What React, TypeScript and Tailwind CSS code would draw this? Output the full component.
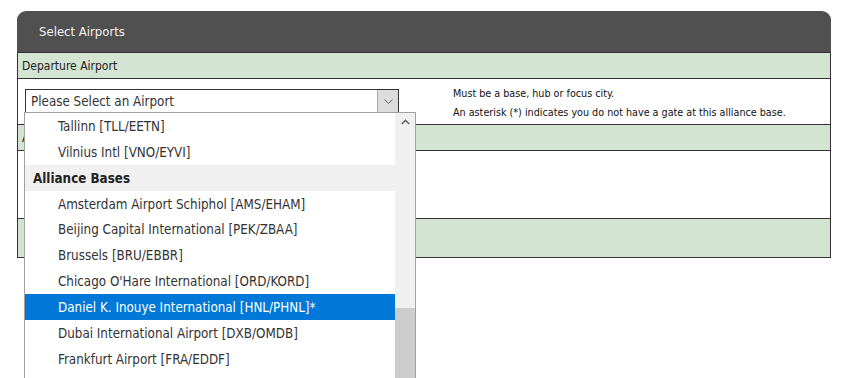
import React from "react";

const items: { label: string; group?: boolean; selected?: boolean }[] = [
  { label: "Tallinn [TLL/EETN]" },
  { label: "Vilnius Intl [VNO/EYVI]" },
  { label: "Alliance Bases", group: true },
  { label: "Amsterdam Airport Schiphol [AMS/EHAM]" },
  { label: "Beijing Capital International [PEK/ZBAA]" },
  { label: "Brussels [BRU/EBBR]" },
  { label: "Chicago O'Hare International [ORD/KORD]" },
  { label: "Daniel K. Inouye International [HNL/PHNL]*", selected: true },
  { label: "Dubai International Airport [DXB/OMDB]" },
  { label: "Frankfurt Airport [FRA/EDDF]" },
];

export default function App() {
  return (
    <div className="relative h-[378px] w-[842px] overflow-hidden bg-white font-['DejaVu_Sans_Condensed','DejaVu_Sans',sans-serif] pl-[17px] pt-[11px]">
      <div className="w-[814px]">
        <div className="flex h-[41px] items-center rounded-t-[9px] bg-[#505050] pl-[22px] pt-[1px] text-[13px] text-[#f2f2f2]">
          Select Airports
        </div>
        <div className="border-x border-b border-[#333333]">
          <div className="flex h-[26px] items-center border-t border-[#333333] bg-[#d3e4d3] pl-[4px] text-[12px] text-[#222222]">
            Departure Airport
          </div>
          <div className="flex h-[46px] items-start border-t border-[#333333] bg-white pl-[7px]">
            <div className="relative mt-[10px] flex h-[24px] w-[374px] items-center border border-[#333333] bg-white pl-[5px] pt-[2px] text-[13.3px] text-[#333333]">
              Please Select an Airport
              <div className="absolute bottom-0 right-0 top-0 flex w-[21px] items-center justify-center border-l border-[#a8a8a8] bg-[#dcdcdc]">
                <svg width="9" height="5" viewBox="0 0 9 5" fill="none">
                  <path d="M0.5 0.5 L4.5 4.5 L8.5 0.5" stroke="#606060" strokeWidth="1" />
                </svg>
              </div>
            </div>
            <div className="ml-[54px] mt-[5px] flex flex-col text-[10.7px] leading-[19px] text-[#111111]">
              <span>Must be a base, hub or focus city.</span>
              <span>An asterisk (*) indicates you do not have a gate at this alliance base.</span>
            </div>
          </div>
          <div className="flex h-[26px] items-center border-t border-[#333333] bg-[#d3e4d3] pl-[4px] text-[12px] text-[#222222]">
            Arrival Airport
          </div>
          <div className="h-[68px] border-t border-[#333333] bg-white" />
          <div className="h-[39px] border-t border-[#333333] bg-[#d3e4d3]" />
        </div>
      </div>

      <div className="absolute left-[24px] top-[112px] flex h-[280px] w-[392px] border border-[#a0a0a0] bg-white">
        <div className="flex w-[370px] flex-col pt-[0.3px]">
          {items.map((it) =>
            it.group ? (
              <div
                key={it.label}
                className="flex h-[25.87px] shrink-0 items-center bg-[#f0f0f0] pl-[8px] pt-[1.5px] text-[13.3px] font-bold text-[#222222]"
              >
                {it.label}
              </div>
            ) : it.selected ? (
              <div
                key={it.label}
                className="flex h-[25.87px] shrink-0 items-center bg-[#0078d7] pl-[33px] pt-[1.5px] text-[13.3px] text-white"
              >
                {it.label}
              </div>
            ) : (
              <div
                key={it.label}
                className="flex h-[25.87px] shrink-0 items-center pl-[33px] pt-[1.5px] text-[13.3px] text-[#333333]"
              >
                {it.label}
              </div>
            )
          )}
        </div>
        <div className="flex w-[20px] flex-col bg-[#f0f0f0]">
          <div className="flex h-[17px] shrink-0 items-center justify-center">
            <svg width="9" height="6" viewBox="0 0 9 6" fill="none">
              <path d="M0.8 5 L4.5 1.3 L8.2 5" stroke="#606060" strokeWidth="1.6" />
            </svg>
          </div>
          <div className="h-[178px] shrink-0" />
          <div className="flex-1 bg-[#cdcdcd]" />
        </div>
      </div>
    </div>
  );
}
